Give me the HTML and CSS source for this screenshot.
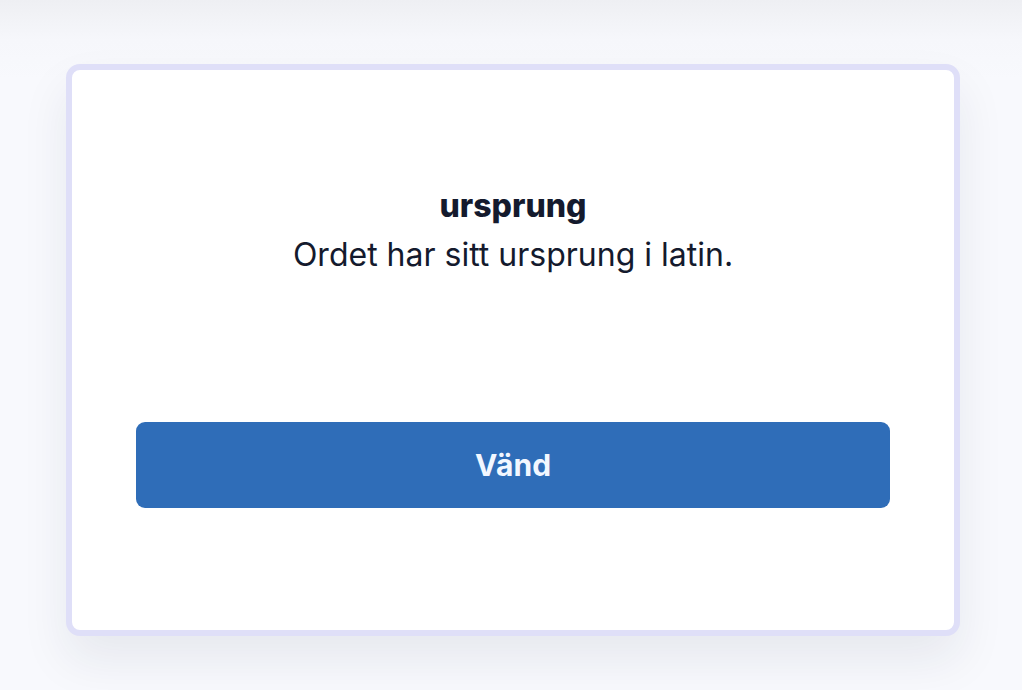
FILE: index.html
```html
<!DOCTYPE html>
<html lang="sv">
<head>
<meta charset="utf-8">
<link rel="stylesheet" href="styles.css">
<title>Kort</title>
</head>
<body>
  <main class="page">
    <section class="card">
      <div class="card-text">
        <h2 class="term">ursprung</h2>
        <p class="definition">Ordet har sitt ursprung i latin.</p>
      </div>
      <button class="flip-btn" type="button">Vänd</button>
    </section>
  </main>
</body>
</html>
```

FILE: styles.css
```css
html, body {
  margin: 0;
  height: 100%;
}
body {
  background: linear-gradient(180deg, #eeeff3 0px, #f6f7fb 40px, #f8f9fd 80px);
  font-family: Inter, "Noto Sans", sans-serif;
  color: #141a2d;
}
.page {
  padding: 64px 62px 0 66px;
}
.card {
  box-sizing: border-box;
  width: 894px;
  height: 572px;
  background: #ffffff;
  border: 6px solid #dfdff8;
  border-radius: 14px;
  box-shadow: 0 24px 48px rgba(30, 35, 60, 0.08);
  padding: 0 64px;
  display: flex;
  flex-direction: column;
}
.card-text {
  box-sizing: border-box;
  text-align: center;
  padding-top: 112px;
  height: 352px;
}
.term {
  margin: 0;
  font-size: 32px;
  font-weight: 800;
  line-height: 48px;
}
.definition {
  margin: 0;
  font-size: 32px;
  font-weight: 400;
  line-height: 50px;
}
.flip-btn {
  height: 86px;
  width: 100%;
  border: none;
  border-radius: 9px;
  background: #2f6db8;
  color: #f2f7ff;
  font-family: Inter, "Noto Sans", sans-serif;
  font-size: 30px;
  font-weight: 700;
}
```
